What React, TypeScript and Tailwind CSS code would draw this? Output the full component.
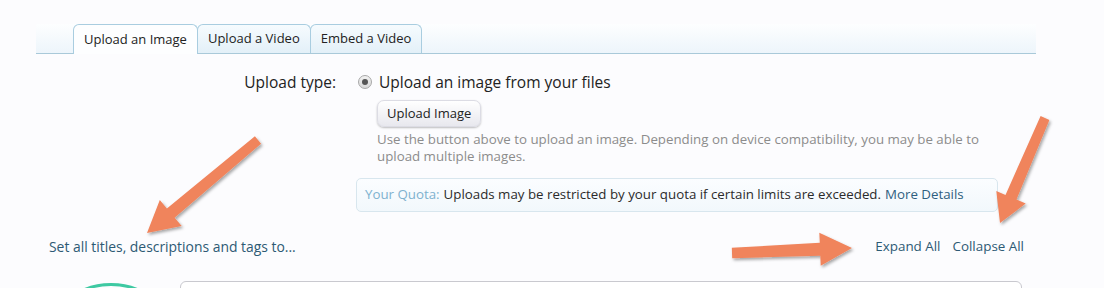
import React from "react";

type Pt = [number, number];

function arrowPoints(tail: Pt, tip: Pt, shaft = 12, headLen = 32, headW = 34): string {
  const dx = tip[0] - tail[0];
  const dy = tip[1] - tail[1];
  const len = Math.hypot(dx, dy);
  const ux = dx / len;
  const uy = dy / len;
  const nx = -uy;
  const ny = ux;
  const bx = tip[0] - ux * headLen;
  const by = tip[1] - uy * headLen;
  const tailW = shaft * 0.8;
  const pts: Pt[] = [
    [tail[0] + (nx * tailW) / 2, tail[1] + (ny * tailW) / 2],
    [bx + (nx * shaft) / 2, by + (ny * shaft) / 2],
    [bx + (nx * headW) / 2, by + (ny * headW) / 2],
    tip,
    [bx - (nx * headW) / 2, by - (ny * headW) / 2],
    [bx - (nx * shaft) / 2, by - (ny * shaft) / 2],
    [tail[0] - (nx * tailW) / 2, tail[1] - (ny * tailW) / 2],
  ];
  return pts.map((p) => `${p[0].toFixed(1)},${p[1].toFixed(1)}`).join(" ");
}

function Arrows() {
  return (
    <svg
      className="absolute inset-0 pointer-events-none"
      width={1104}
      height={288}
      viewBox="0 0 1104 288"
      aria-hidden="true"
    >
      <defs>
        <filter id="shadow" x="-20%" y="-20%" width="140%" height="140%">
          <feDropShadow dx="1.5" dy="2" stdDeviation="1.6" floodColor="#000" floodOpacity="0.35" />
        </filter>
      </defs>
      <g fill="#f0845c" filter="url(#shadow)">
        <polygon points={arrowPoints([258, 140], [147, 233], 12, 31, 34)} />
        <polygon points={arrowPoints([1045, 118], [1000, 223], 12, 28, 32)} />
        <polygon points={arrowPoints([732, 253], [852, 248], 13, 32, 33)} />
      </g>
    </svg>
  );
}

function Tab({ label, active }: { label: string; active?: boolean }) {
  return (
    <div
      className={`px-[10px] flex items-center border border-b-0 border-[#a9cde0] rounded-t-[6px] -ml-px first:ml-0 text-[13px] text-[#222]
        ${active ? "bg-[#fdfeff] h-[30px] -mb-px relative z-10" : "h-[29px] bg-gradient-to-b from-[#f6fbfe] to-[#e3f0f8]"}
      `}
    >
      {label}
    </div>
  );
}

export default function App() {
  return (
    <div
      className="relative w-[1104px] h-[288px] overflow-hidden bg-[#fcfcfe] text-[#222]"
      style={{ fontFamily: "'Open Sans', 'Liberation Sans', sans-serif" }}
    >
      <div className="pt-[24px] pl-[36px] pr-[68px]">
        {/* tab bar */}
        <div className="flex items-end h-[30px] pl-[37px] bg-gradient-to-b from-[#fdfeff] to-[#edf5fb] border-b border-[#a9c9d9]">
          <Tab label="Upload an Image" active />
          <Tab label="Upload a Video" />
          <Tab label="Embed a Video" />
        </div>

        {/* form */}
        <div className="flex mt-[18px]">
          <div className="w-[300px] text-right text-[15.5px] leading-[20px] text-[#222]">Upload type:</div>
          <div className="ml-[20px] w-[642px]">
            <div className="flex items-center gap-[7px] ml-[2px] text-[15.5px] leading-[20px]">
              <span className="w-[14px] h-[14px] rounded-full border border-[#a8a8a8] bg-gradient-to-b from-[#f2f2f2] to-[#d8d8d8] flex items-center justify-center">
                <span className="w-[6px] h-[6px] rounded-full bg-[#555]" />
              </span>
              Upload an image from your files
            </div>
            <button className="mt-[8px] ml-[21px] h-[27px] px-[9px] rounded-[7px] border border-[#dcdce4] bg-gradient-to-b from-[#ffffff] to-[#e8e8ee] shadow-[0_1px_2px_rgba(0,0,0,0.25)] text-[13px] text-[#222]">
              Upload Image
            </button>
            <p className="mt-[4px] ml-[21px] w-[621px] text-[13.3px] leading-[17px] text-[#8c8c8c]">
              Use the button above to upload an image. Depending on device compatibility, you may be able to
              upload multiple images.
            </p>
            <div className="mt-[13px] h-[34px] flex items-center px-[8px] rounded-[5px] border border-[#d8e6ee] bg-gradient-to-b from-[#fbfdff] to-[#f2f8fc] text-[13.3px] text-[#2b2b2b] whitespace-nowrap">
              <span className="text-[#7eb2cf]">Your Quota:</span>
              <span className="ml-[4px]">Uploads may be restricted by your quota if certain limits are exceeded.</span>
              <span className="ml-[4px] text-[#2f5f80]">More Details</span>
            </div>
          </div>
        </div>

        {/* bulk links */}
        <div className="flex justify-between items-center mt-[26px] pl-[13px] pr-[12px] text-[13px] leading-[17px] text-[#2d5a74]">
          <span className="text-[13.9px]">Set all titles, descriptions and tags to...</span>
          <div className="flex gap-[12px] text-[13.4px]">
            <span>Expand All</span>
            <span>Collapse All</span>
          </div>
        </div>

        {/* first upload row */}
        <div className="flex mt-[26px] pl-[5px] pr-[14px]">
          <div className="mt-[2px] w-[140px] h-[140px] shrink-0 rounded-full border-[3px] border-[#3ec9a2]" />
          <div className="-ml-px flex-1 h-[80px] rounded-[6px] border border-[#c9c9cf] bg-white" />
        </div>
      </div>

      <Arrows />
    </div>
  );
}
